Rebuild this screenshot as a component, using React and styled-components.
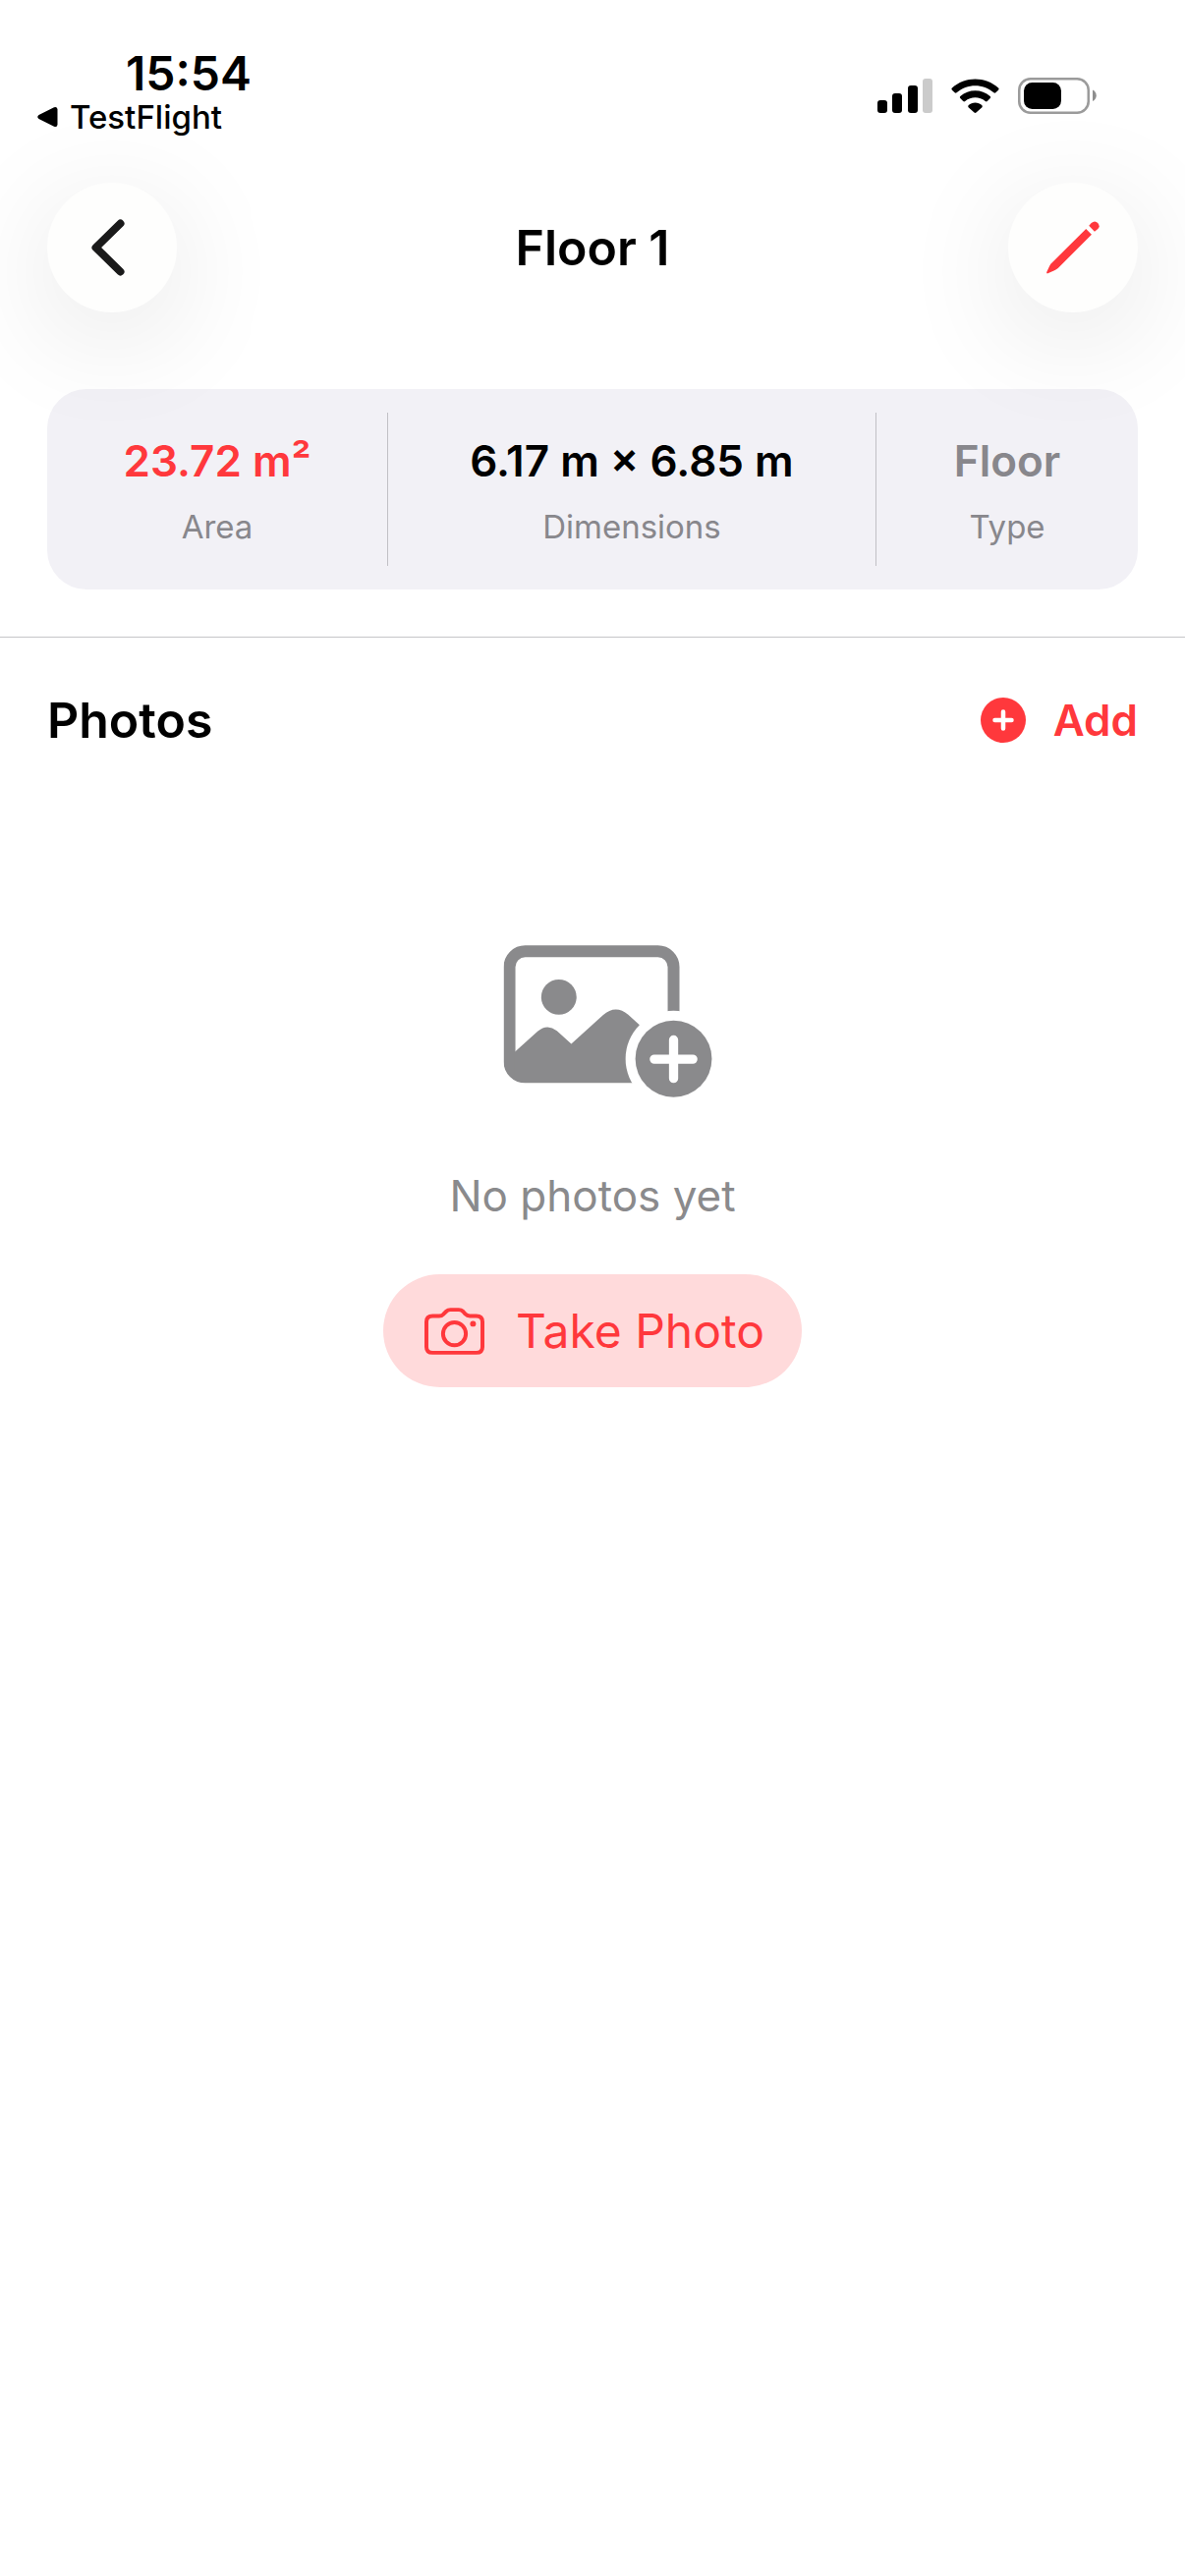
import React from "react";
import styled, { createGlobalStyle } from "styled-components";

const stats = [
  { label: "Area", value: "23.72 m²", color: "#ff383c" },
  { label: "Dimensions", value: "6.17 m × 6.85 m", color: "#000" },
  { label: "Type", value: "Floor", color: "#88878c" },
];

const SignalIcon = () => (
  <svg width="56" height="35" viewBox="0 0 56 35">
    <rect x="0" y="22" width="10" height="13" rx="3" />
    <rect x="15" y="15" width="10" height="20" rx="3" />
    <rect x="31" y="7" width="10" height="28" rx="3" />
    <rect x="46" y="0" width="10" height="35" rx="3" fill="#cbcbcb" />
  </svg>
);

const WifiIcon = () => (
  <svg width="49" height="36" viewBox="486 149 148 108">
    <path d="M488 178Q486 181 489 184L497 192Q500 195 503 192C535 163 585 163 617 192Q620 195 623 192L631 184Q634 181 632 178C591 141 529 141 488 178Z" />
    <path d="M514 203Q511 206 514 209L523 218Q526 221 529 218C547 203 573 203 591 218Q594 221 597 218L606 209Q609 206 606 203C580 180 540 180 514 203Z" />
    <path d="M539 231C551 220 569 220 581 231Q583 234 581 237L563 253Q560 256 557 253L539 237Q537 234 539 231Z" />
  </svg>
);

const BatteryIcon = () => (
  <svg width="80" height="37" viewBox="0 0 80 37">
    <rect
      x="1.25"
      y="1.25"
      width="70.5"
      height="34.5"
      rx="11.5"
      fill="none"
      stroke="#9b9b9b"
      strokeWidth="2.5"
    />
    <rect x="6" y="5" width="38" height="27" rx="8.5" />
    <path d="M76 12.5C81 15 81 21.5 76 24Z" fill="#8e8e8e" />
  </svg>
);

const ChevronIcon = () => (
  <svg width="34" height="58" viewBox="0 0 34 58">
    <path
      d="M29.5 4.5L4.5 29L29.5 53.5"
      fill="none"
      stroke="#1a1a1a"
      strokeWidth="8"
      strokeLinecap="round"
      strokeLinejoin="round"
    />
  </svg>
);

const PencilIcon = () => (
  <svg width="54" height="54" viewBox="777 587 161 161" fill="#ff383c">
    <path d="M897 611L914 628L812 730Q806 735 798 738L781 746Q776 747 778 741L786 724Q789 717 795 712Z" />
    <path d="M906 601L913 593Q924 584 933 593Q941 603 933 611L923 619Z" />
  </svg>
);

const AddIcon = () => (
  <svg width="46" height="46" viewBox="0 0 46 46">
    <circle cx="23" cy="23" r="23" fill="#ff383c" />
    <path
      d="M23 14.5V31.5M14.5 23H31.5"
      stroke="#fff"
      strokeWidth="4.5"
      strokeLinecap="round"
    />
  </svg>
);

const PhotoIcon = () => (
  <svg width="213" height="155" viewBox="99 95 639 466" fill="#8a8a8c">
    <mask id="badge" maskUnits="userSpaceOnUse" x="99" y="95" width="639" height="466">
      <rect x="99" y="95" width="639" height="466" fill="#fff" />
      <circle cx="620" cy="443" r="147" fill="#000" />
    </mask>
    <g mask="url(#badge)">
      <rect
        x="118"
        y="114"
        width="502"
        height="385"
        rx="48"
        fill="none"
        stroke="#8a8a8c"
        strokeWidth="36"
      />
      <circle cx="269" cy="254" r="54" />
      <path d="M134 422L204 359Q233 334 263 357L307 397L404 309Q443 275 481 308L601 417V501H134Z" />
    </g>
    <circle cx="620" cy="443" r="117" />
    <path
      d="M620 385V503M561 444H679"
      stroke="#fff"
      strokeWidth="28"
      strokeLinecap="round"
    />
  </svg>
);

const CameraIcon = () => (
  <svg
    width="61"
    height="48"
    viewBox="159 480 184 144"
    fill="none"
    stroke="#ff383c"
    strokeWidth="12"
  >
    <path d="M165 523Q165 505 184 505H204Q213 505 218 499L226 491Q231 486 239 486H264Q272 486 277 491L284 499Q290 505 298 505H318Q337 505 337 523V600Q337 618 318 618H184Q165 618 165 600Z" />
    <circle cx="251" cy="560" r="35" />
    <circle cx="308" cy="529" r="9" fill="#ff383c" stroke="none" />
  </svg>
);

const App = () => {
  return (
    <>
      <GlobalStyle />
      <StatusBar>
        <StatusLeft>
          <Time>15:54</Time>
          <BackToApp href="#testflight">
            <svg width="21" height="22" viewBox="0 0 21 22">
              <path d="M1.5 9L17 1.2Q20.5 0 20.5 3.5V18.5Q20.5 22 17 20.8L1.5 13Q-1 11 1.5 9Z" />
            </svg>
            TestFlight
          </BackToApp>
        </StatusLeft>
        <StatusIcons>
          <SignalIcon />
          <WifiIcon />
          <BatteryIcon />
        </StatusIcons>
      </StatusBar>

      <Header>
        <RoundButton aria-label="Back">
          <ChevronIcon />
        </RoundButton>
        <Title>Floor 1</Title>
        <RoundButton aria-label="Edit">
          <PencilIcon />
        </RoundButton>
      </Header>

      <Summary>
        <Card>
          {stats.map((stat) => (
            <Stat key={stat.label}>
              <Value $color={stat.color}>{stat.value}</Value>
              <Label>{stat.label}</Label>
            </Stat>
          ))}
        </Card>
      </Summary>

      <PhotosBar>
        <SectionTitle>Photos</SectionTitle>
        <AddButton>
          <AddIcon />
          Add
        </AddButton>
      </PhotosBar>

      <Empty>
        <PhotoIcon />
        <EmptyText>No photos yet</EmptyText>
        <TakePhoto>
          <CameraIcon />
          Take Photo
        </TakePhoto>
      </Empty>
    </>
  );
};

export default App;

const GlobalStyle = createGlobalStyle`
  * {
    box-sizing: border-box;
  }

  body {
    margin: 0;
    background: #fff;
    color: #000;
    font-family: Inter, "Liberation Sans", sans-serif;
  }

  button {
    border: none;
    padding: 0;
    background: none;
    font-family: inherit;
    cursor: pointer;
  }

  svg {
    display: block;
    flex-shrink: 0;
  }
`;
const StatusBar = styled.div`
  display: flex;
  align-items: flex-start;
  justify-content: space-between;
  padding: 48px 90px 0 38px;
`;
const StatusLeft = styled.div`
  display: flex;
  flex-direction: column;
`;
const Time = styled.div`
  padding-left: 90px;
  font-size: 48px;
  font-weight: 600;
  line-height: 54px;
`;
const BackToApp = styled.a`
  display: flex;
  align-items: center;
  gap: 12px;
  color: #000;
  font-size: 33px;
  font-weight: 500;
  line-height: 34px;
  text-decoration: none;
`;
const StatusIcons = styled.div`
  display: flex;
  align-items: center;
  gap: 19px;
  padding-top: 31px;
`;
const Header = styled.header`
  position: relative;
  z-index: 1;
  display: grid;
  grid-template-columns: 132px 1fr 132px;
  align-items: center;
  padding: 50px 48px 0;
`;
const RoundButton = styled.button`
  display: flex;
  align-items: center;
  justify-content: center;
  height: 132px;
  border-radius: 50%;
  background: #fefefd;
  box-shadow: 0 24px 120px rgba(0, 0, 0, 0.11);

  &:first-child {
    padding-right: 8px;
  }
`;
const Title = styled.h1`
  margin: 0;
  font-size: 50px;
  font-weight: 600;
  line-height: 60px;
  text-align: center;
`;
const Summary = styled.section`
  padding: 78px 48px 48px;
  border-bottom: 1px solid #c6c6c8;
`;
const Card = styled.div`
  display: grid;
  grid-template-columns: 346fr 497fr 267fr;
  padding: 24px 0;
  border-radius: 40px;
  background: #f2f1f6;
`;
const Stat = styled.div`
  display: flex;
  flex-direction: column;
  align-items: center;
  gap: 18px;
  padding: 22px 0 18px;

  & + & {
    border-left: 1px solid #c1c0c5;
  }
`;
const Value = styled.div`
  color: ${({ $color }) => $color};
  font-size: 44px;
  font-weight: 600;
  line-height: 54px;
`;
const Label = styled.div`
  color: #88878c;
  font-size: 33px;
  line-height: 44px;
`;
const PhotosBar = styled.div`
  display: flex;
  align-items: center;
  justify-content: space-between;
  padding: 54px 48px 0;
`;
const SectionTitle = styled.h2`
  margin: 0;
  font-size: 50px;
  font-weight: 600;
  line-height: 60px;
`;
const AddButton = styled.button`
  display: flex;
  align-items: center;
  gap: 28px;
  color: #ff383c;
  font-size: 44px;
  font-weight: 600;
  line-height: 60px;
`;
const Empty = styled.div`
  display: flex;
  flex-direction: column;
  align-items: center;
  padding: 199px 48px 0;

  & > svg {
    margin-left: 30px;
  }
`;
const EmptyText = styled.p`
  margin: 72px 0 52px;
  color: #8a8a8c;
  font-size: 44px;
  line-height: 56px;
`;
const TakePhoto = styled.button`
  display: flex;
  align-items: center;
  gap: 32px;
  height: 115px;
  padding: 0 38px 0 42px;
  border-radius: 58px;
  background: #ffdadb;
  color: #ff383c;
  font-size: 48px;
`;
